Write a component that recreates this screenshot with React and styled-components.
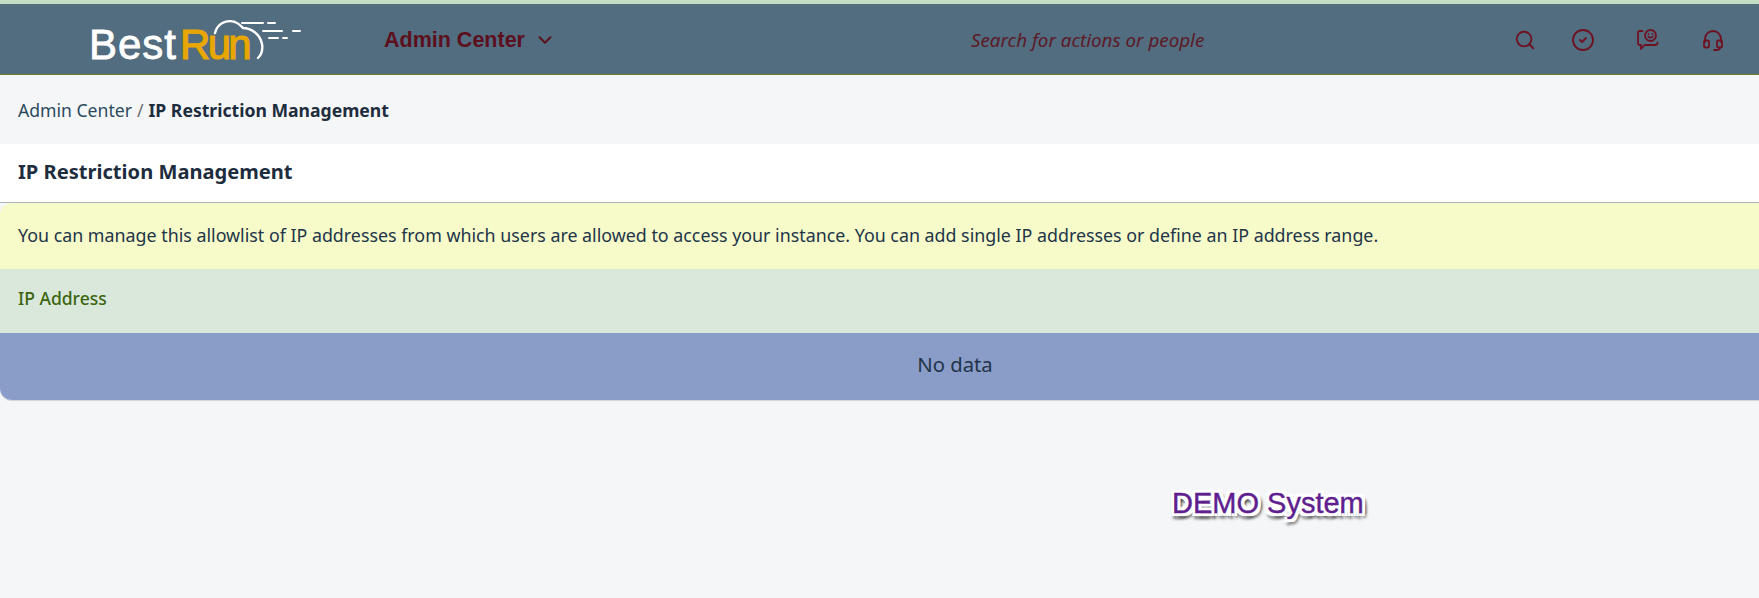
import React from "react";
import styled, { createGlobalStyle } from "styled-components";
import { Search, CircleCheck, ChevronDown } from "lucide-react";

const GlobalStyle = createGlobalStyle`
  html, body {
    margin: 0;
    padding: 0;
    background: #f5f6f7;
    font-family: "Noto Sans", "Liberation Sans", Arial, sans-serif;
    color: #1d2d3e;
  }
`;

const Page = styled.div`
  position: relative;
  width: 1759px;
  height: 598px;
  overflow: hidden;
  background: #f5f6f7;
`;

const TopStrip = styled.div`
  height: 4px;
  background: #c5dcc3;
`;

const Header = styled.header`
  display: grid;
  grid-template-columns: 384px 1fr 269px;
  align-items: center;
  height: 71px;
  padding-top: 2px;
  box-sizing: border-box;
  background: #526c80;
  border-bottom: 1px solid #6f7f2c;
`;

const Left = styled.div`
  display: flex;
  align-items: center;
  padding-left: 90px;
`;

const Logo = styled.div`
  position: relative;
  display: flex;
  width: 294px;
  height: 68px;
  align-items: center;
  flex: none;
  font-family: "Liberation Sans", Arial, sans-serif;
  font-size: 42px;
  line-height: 1;
  color: #fff;
  -webkit-text-stroke: 0.8px #fff;
  & span {
    margin: 10px 0 0 -1px;
    letter-spacing: 1px;
    white-space: nowrap;
  }
  & b {
    font-weight: 400;
    margin-left: 3px;
    letter-spacing: -2.7px;
    color: #e8a700;
    -webkit-text-stroke: 1.2px #e8a700;
  }
  & svg {
    position: absolute;
    left: 120px;
    top: 8px;
  }
`;

const AdminMenu = styled.button`
  display: flex;
  flex: none;
  align-items: center;
  gap: 9px;
  padding: 0;
  border: 0;
  background: none;
  font-family: "Liberation Sans", Arial, sans-serif;
  font-size: 21.5px;
  font-weight: 700;
  color: #5c0f1c;
`;

const SearchHint = styled.div`
  padding-left: 587px;
  font-size: 18.8px;
  font-style: italic;
  color: #5c1a26;
  white-space: nowrap;
`;

const IconRow = styled.div`
  display: flex;
  align-items: center;
  padding-left: 24px;
  gap: 41px;
  color: #6e1222;
  & svg {
    display: block;
    flex: none;
  }
`;

const SearchIcon = styled(Search)`
  margin-right: -6px;
`;

const Breadcrumb = styled.nav`
  display: flex;
  align-items: center;
  height: 69px;
  padding-left: 18px;
  font-size: 17.6px;
  color: #2b4a5e;
  & strong {
    margin-left: 5px;
    font-weight: 700;
    color: #1d2d3e;
  }
  & i {
    margin-left: 5px;
    font-style: normal;
    color: #6a6d70;
  }
`;

const TitleBar = styled.div`
  display: flex;
  align-items: center;
  height: 59px;
  padding: 0 0 3px 18px;
  box-sizing: border-box;
  background: #fff;
  border-bottom: 1px solid #a9b4be;
  font-size: 20.1px;
  font-weight: 700;
  color: #1d2d3e;
`;

const Panel = styled.section`
  display: flex;
  flex-direction: column;
  width: 1910px;
  overflow: hidden;
  border-radius: 12px;
  box-shadow: 0 1px 1px rgba(85, 107, 130, 0.25);
`;

const Notice = styled.div`
  display: flex;
  align-items: center;
  height: 66px;
  padding: 0 0 2px 18px;
  box-sizing: border-box;
  background: #f7fbca;
  font-size: 17.83px;
  color: #223548;
`;

const ColumnHead = styled.div`
  display: flex;
  align-items: center;
  height: 64px;
  padding: 0 0 6px 18px;
  box-sizing: border-box;
  background: #d9e8db;
  font-size: 17.5px;
  font-weight: 500;
  color: #3c6510;
`;

const EmptyRow = styled.div`
  display: flex;
  align-items: center;
  justify-content: center;
  height: 67px;
  padding-bottom: 5px;
  box-sizing: border-box;
  background: #8a9cc8;
  font-size: 20.3px;
  color: #223548;
`;

const Watermark = styled.div`
  position: absolute;
  left: 1172px;
  top: 485px;
  font-family: "Liberation Sans", Arial, sans-serif;
  font-size: 29px;
  line-height: 36px;
  white-space: nowrap;
  color: #5f1f8f;
  -webkit-text-stroke: 0.4px #5f1f8f;
  text-shadow:
    3px 0 0 #fff, -3px 0 0 #fff, 0 3px 0 #fff, 0 -3px 0 #fff,
    3px 3px 0 #fff, -3px 3px 0 #fff, 3px -3px 0 #fff, -3px -3px 0 #fff,
    -1px 6px 3px rgba(0, 0, 0, 0.55),
    4px 5px 3px rgba(0, 0, 0, 0.55),
    5px 1px 2px rgba(0, 0, 0, 0.3);
`;

const CloudMark = () => (
  <svg width="100" height="50" viewBox="210 14 100 50" fill="none" stroke="#fff" strokeLinecap="round">
    <path d="M215 33 C217 24 226 19 235 22 C240 24 242 27 243 28 C251 28 260 34 262 44 C263 50 261 55 258 58" strokeWidth="2.4" />
    <path d="M242 23 H263 M268 23 H275" strokeWidth="2" />
    <path d="M263 31 H282 M293 31 H300" strokeWidth="2" />
    <path d="M269 38 H278 M283 38 H287" strokeWidth="2" />
  </svg>
);

const ChatSmile = () => (
  <svg width="24" height="24" viewBox="0 0 24 24" fill="none" stroke="currentColor" strokeWidth="1.8" strokeLinecap="round" strokeLinejoin="round">
    <circle cx="14.5" cy="7.5" r="5.5" />
    <path d="M12.3 8.6c.9 1.4 3.5 1.4 4.4 0" />
    <path d="M12.5 6h.01M16.5 6h.01" />
    <path d="M6.5 3H3.5A1.5 1.5 0 0 0 2 4.5v11A1.5 1.5 0 0 0 3.5 17H5v4l3.5-4H19c1.5 0 2.5-1 2.5-2.5" />
  </svg>
);

const Headset = () => (
  <svg width="24" height="24" viewBox="0 0 24 24" fill="none" stroke="currentColor" strokeWidth="1.8" strokeLinecap="round" strokeLinejoin="round">
    <path d="M4 14v-3a8 8 0 0 1 16 0v3" />
    <rect x="3" y="12.5" width="5" height="7" rx="1.2" />
    <rect x="16" y="12.5" width="5" height="7" rx="1.2" />
    <path d="M19 19.5c0 1.6-1.6 2.5-3.5 2.5H13" />
  </svg>
);

const App = () => (
  <Page>
    <GlobalStyle />
    <TopStrip />
    <Header>
      <Left>
        <Logo>
          <span>Best<b>Run</b></span>
          <CloudMark />
        </Logo>
        <AdminMenu>
          Admin Center
          <ChevronDown size={22} strokeWidth={2} />
        </AdminMenu>
      </Left>
      <SearchHint>Search for actions or people</SearchHint>
      <IconRow>
        <SearchIcon size={22} strokeWidth={2} />
        <CircleCheck size={24} strokeWidth={1.8} />
        <ChatSmile />
        <Headset />
      </IconRow>
    </Header>
    <Breadcrumb>
      Admin Center <i>/</i> <strong>IP Restriction Management</strong>
    </Breadcrumb>
    <TitleBar>IP Restriction Management</TitleBar>
    <Panel>
      <Notice>
        You can manage this allowlist of IP addresses from which users are allowed to access your instance. You can add single IP addresses or define an IP address range.
      </Notice>
      <ColumnHead>IP Address</ColumnHead>
      <EmptyRow>No data</EmptyRow>
    </Panel>
    <Watermark>DEMO System</Watermark>
  </Page>
);

export default App;
